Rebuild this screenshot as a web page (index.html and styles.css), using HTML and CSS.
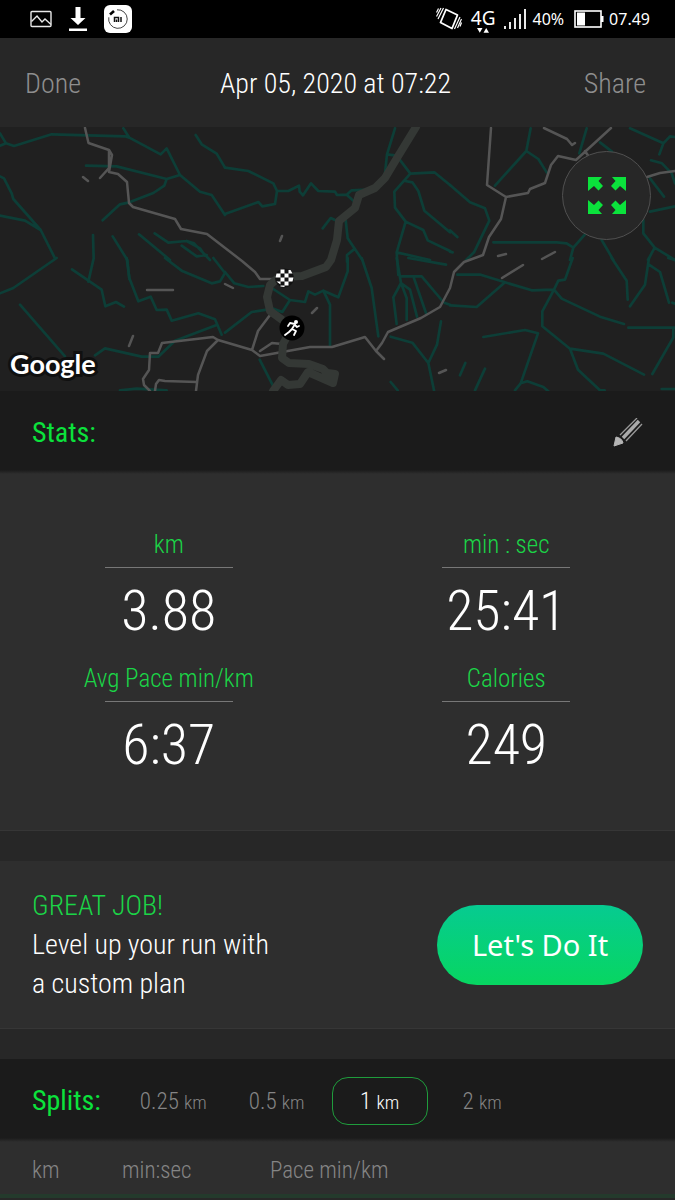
FILE: index.html
```html
<!DOCTYPE html>
<html lang="en">
<head>
<meta charset="utf-8">
<meta name="viewport" content="width=device-width, initial-scale=1">
<title>Run summary</title>
<link rel="stylesheet" href="styles.css">
</head>
<body>
<div class="status">
  <div class="status-left">
    <svg width="22" height="18" viewBox="0 0 22 18" fill="none" stroke="#e8e8e8" stroke-width="1.4"><rect x="1" y="1.500" width="20" height="15" rx="1"/><path d="M1.500 11.500L7 6l5 6 3-3 6 5.500"/></svg>
    <svg width="18" height="24" viewBox="0 0 18 24" fill="#fff"><path d="M6.500 0h5v11h5L9 18 1.500 11h5zM0 21.500h18V24H0z"/></svg>
    <svg width="28" height="28" viewBox="0 0 28 28"><rect width="28" height="28" rx="6" fill="#fff"/><path d="M13 4.800a9.300 9.300 0 1 1-8.200 7.500" fill="none" stroke="#444" stroke-width="1"/><path d="M6 9.500l4-3.500" stroke="#000" stroke-width="2.600"/><path d="M10.500 17v-4.500h4V17M12.500 14.500V17M17 12v5" fill="none" stroke="#111" stroke-width="1.500"/></svg>
  </div>
  <div class="status-right">
    <svg width="26" height="24" viewBox="0 0 26 24" fill="none" stroke="#fff" stroke-width="1.200"><path d="M10 2.500l11.500 5.500-5.500 13.500-11.500-6z" stroke-linejoin="round" stroke-width="1.800"/><path d="M7.500 1L2 12M5 1L.5 9.500M2.500 1.500L.5 5.500M18.500 22l5.500-12M21.500 21l4-9M24 19.500l1.500-4"/></svg>
    <span class="net">4G<svg width="12" height="5" viewBox="0 0 12 5" fill="#fff"><path d="M0 0h5.500L2.800 4.800zM6.500 4.800H12L9.200 0z"/></svg></span>
    <svg width="23" height="20" viewBox="0 0 23 20" fill="#e8e8e8"><path d="M0 17h2v3H0zM5 13h2v7H5zM10 9h2v11h-2zM15 5h2v15h-2zM20 0h2v20h-2z"/></svg>
    <span>40%</span>
    <svg class="battery" width="30" height="18" viewBox="0 0 30 18"><rect x="1" y="1" width="26" height="16" fill="none" stroke="#fff" stroke-width="1.600"/><path d="M3 2.500h8v13H3zM27 6h2.500v6H27z" fill="#fff"/></svg>
    <span>07.49</span>
  </div>
</div>
<header class="topbar">
  <button class="plain">Done</button>
  <h1>Apr 05, 2020 at 07:22</h1>
  <button class="plain">Share</button>
</header>
<section class="map" aria-label="Route map">
  <svg class="roads" viewBox="0 127 675 264" preserveAspectRatio="xMidYMid slice">
    <g class="minor">
      <g transform="translate(0 125) scale(.33333)">
        <path d="M0 25L18 55L42 63L155 28L375 34L388 38L482 88L500 70L540 150L600 200L635 210L675 270M370 10L388 38M0 62L18 55M258 122L350 124L500 162L540 150M500 162L493 182L460 204L388 232L360 238L308 286M587 30L605 58L650 86L675 128M0 154L12 160L35 205L40 222L122 315L165 400M0 272L75 287L122 315M279 330L281 400L265 470M338 334L382 405L388 462M417 328L510 405M464 325L505 353L560 348L582 355L630 405M545 362L590 394L620 390M560 348L600 370L615 392"/>
      </g>
      <g transform="translate(225 125) scale(.33333)">
        <path d="M0 128L70 138L145 175L156 198L190 198L222 182L224 200L234 211L258 175L280 198L330 200L336 210L365 209L380 196L430 194M365 209L390 232M156 198L150 237L112 244L100 231L0 267M510 10L486 88L480 145M486 88L515 92L556 146L628 142L675 180M556 146L508 200L510 248L542 290L595 315L608 346L675 378M540 168L562 172L580 198L598 257L675 322M542 290L515 382L520 450M515 382L615 405M293 310L317 279L335 287M362 285L368 340L412 405M386 374L366 390V410"/>
      </g>
      <g transform="translate(450 125) scale(.33333)">
        <path d="M242 10L229 78L135 182M229 78L265 102L290 142M410 10L388 85M540 10L640 55L660 34L675 36M640 55L628 88M450 52L486 80M603 106L636 115L665 145L675 175M600 160L642 215M600 260L675 244M580 285V325L614 368L675 405M614 368L594 405M0 180L60 232L105 250L118 287L72 382L48 405M0 316L22 336M0 380L8 382M130 352H320L350 355L370 368L405 328M370 368L360 405M455 345L490 405"/>
      </g>
      <g transform="translate(0 258) scale(.33333)">
        <path d="M0 106L40 90L170 0M216 34L305 95L316 145L348 132L372 146M380 0L388 60L415 130L452 116L470 156L500 155L515 188L595 166L645 184L665 230M495 0L545 38L635 76L660 70L675 45L640 0M60 140L195 295M285 292L315 271L425 296H475L525 248L648 202M360 397L410 392L500 397"/>
      </g>
      <g transform="translate(225 258) scale(.33333)">
        <path d="M0 42L28 76L70 87L115 84M140 90L195 126L172 162L145 152L80 162L0 224M195 126L240 132L250 100L270 110L295 98L340 118L368 40V0M295 98L315 140V265M410 0L440 90L460 235M515 0L528 75L505 118L515 198M528 75L545 120V186M528 75L555 95L576 176M530 55H565L603 165M565 55H590L655 132M550 0L663 20M660 135L675 140M497 236L562 254L610 315L627 397M610 315L636 260L648 190M497 372L518 397M104 305L145 385"/>
      </g>
      <g transform="translate(450 258) scale(.33333)">
        <path d="M22 50H92L165 73L245 97L312 95L325 68L345 65L368 0M0 142L80 147L165 73M312 95L277 160V205L360 272L460 287L582 350M312 95L335 122L450 176L522 198M360 272L384 335L450 397H464M100 237L225 216L264 226L212 376L195 397M212 376L232 370L280 387L295 400M46 315L30 352M105 332L75 397M485 0L530 68L533 125M597 0L585 80L540 145M597 20L630 42L657 134M667 134L675 137M535 209H675M670 209V238L607 348M635 393H675M655 0L675 6"/>
      </g>
    </g>
    <g class="major">
      <path d="M85 128L88.500 143L109 150L112 155L109 172L118 174L127 182L129 203L133 207L175 219L181 229L207 234L242 261L255 272L260 279H273M109 151V168L100 178M83 177L88 181M280 241L282 236"/>
      <path d="M491 128L487 185L506 197L501 219L489 237L483 255L464 262L454 272L450 288L440 307L421 318L388 332L382 343L376 351L365 337L332 347L310 347L260 356L252 350L218 340L213 337L162 343L158 353H150L149 370L143 379L144 385L150 391M218 340L207 351L198 375L196 391M197 382L165 381L159 380L156 384L155 391M376 351L384 359M252 350L258 331L270 315M260 351L272 343L282 344M506 197L528 193L530 189L545 183L551 165L558 156L576 160L611 128M585 151L589 157M544 128L567 139L572 145L575 143M647 177L660 173L675 171M498 256L506 254M542 259L555 252M502 278L523 265M147 290H173M129 346L133 336M225 284L233 288M312 313L317 308M439 373L446 370"/>
    </g>
    <path class="river" d="M416 127L397 158L385 178L375 188L359 195L355 208L339 221L337 240L331 260L326 267L302 276L279 277L270 285L267 297L270 311L292 327L283 344L282 358L289 363L309 364L323 369L327 373L335 374L333 383L308 372L300 384L288 385L281 380L273 391"/>
    <g transform="translate(284.500 278)">
      <circle r="9.500" fill="#111"/>
      <path fill="#fff" d="M-4-8.500h4v4h-4zM4-8h2l2 3.500H4zM-8-4.500h4v4h-5zM0-4.500h4v4H0zM-4-.500h4v4h-4zM4-.500h5l-1 4H4zM-8 3.500h4v3zM0 3.500h4v4H0zM-4 7.500h4v1.500l-4-.5z"/>
    </g>
    <g transform="translate(292 328)">
      <circle r="12.500" fill="#000"/><circle cx="4" cy="-6" r="2" fill="#fff"/>
      <path d="M-4-2L-2-5L3-4L0 1L4 3L2 7M0 1L-3 4L-7 7M3-3L5-1L7-2" fill="none" stroke="#fff" stroke-width="1.800"/>
    </g>
  </svg>
  <span class="google">Google</span>
  <button class="expand" aria-label="Expand map">
    <svg width="38" height="38" viewBox="-19 -19 38 38" fill="#0be23c"><path d="M-19-19h14l-3.500 4L-4-10l-4.500 4.500L-13-10l-6 5z"/><path d="M19-19H5l3.500 4L4-10l4.500 4.500L13-10l6 5z"/><path d="M-19 18h14l-3.500-4L-4 9l-4.500-4.500L-13 9l-6-5z"/><path d="M19 18H5l3.500-4L4 9l4.500-4.500L13 9l6-5z"/></svg>
  </button>
</section>
<section>
  <div class="bar">
    <h2>Stats:</h2>
    <button class="edit" aria-label="Edit stats"><svg width="30" height="30" viewBox="0 0 30 30"><path d="M1 28L3 19Q9 20 10 25Z" fill="#b5b5b5" stroke="#b5b5b5" stroke-linejoin="round"/><path d="M10 20L26 3" stroke="#aaa" stroke-width="3.500"/><path d="M7 17L24 0M13 23L29 6" stroke="#999" stroke-width="1.300"/></svg></button>
  </div>
  <dl class="stats">
    <div><dt>km</dt><dd>3.88</dd></div>
    <div><dt>min : sec</dt><dd>25:41</dd></div>
    <div><dt>Avg Pace min/km</dt><dd>6:37</dd></div>
    <div><dt>Calories</dt><dd>249</dd></div>
  </dl>
</section>
<section class="promo">
  <p><strong>GREAT JOB!</strong><br>Level up your run with<br>a custom plan</p>
  <button class="cta">Let's Do It</button>
</section>
<section>
  <div class="bar splits">
    <h2>Splits:</h2>
    <div class="tabs">
      <button>0.25 <small>km</small></button>
      <button>0.5 <small>km</small></button>
      <button class="on">1 <small>km</small></button>
      <button>2 <small>km</small></button>
    </div>
  </div>
  <table class="table">
    <thead><tr><th class="c1" scope="col">km</th><th class="c2" scope="col">min:sec</th><th scope="col">Pace min/km</th></tr></thead>
  </table>
</section>
</body>
</html>
```
FILE: styles.css
```css
* { box-sizing: border-box; }
body {
  margin: 0;
  background: #272727;
  color: #fff;
  font-family: "Roboto Condensed", "Liberation Sans Narrow", Roboto, sans-serif;
  font-weight: 300;
}
button { font: inherit; color: inherit; background: none; border: 0; padding: 0; cursor: pointer; }
h1, h2, p, dl, dd { margin: 0; font-weight: inherit; }
svg { display: block; }

.status {
  height: 38px;
  padding: 0 25px 0 30px;
  background: #000;
  display: flex;
  justify-content: space-between;
  align-items: center;
  font: 400 16px "Noto Sans", sans-serif;
}
.status-left { display: flex; align-items: center; gap: 17px; }
.status-right { display: flex; align-items: center; gap: 5px; }
.battery { margin-left: 5px; }
.net { display: flex; flex-direction: column; align-items: center; font-size: 19px; line-height: 20px; padding: 2px 4px 0; }

.topbar {
  height: 89px;
  padding: 2px 29px 0 25px;
  display: grid;
  grid-template-columns: 1fr auto 1fr;
  align-items: center;
  font-size: 28px;
}
.topbar h1 { font-size: 28px; }
.plain { color: #8e8e8e; justify-self: start; }
.plain:last-child { justify-self: end; }

.map { position: relative; height: 264px; background: #202020; overflow: hidden; }
.roads { width: 100%; height: 100%; fill: none; stroke-linejoin: round; stroke-linecap: round; }
.minor { stroke: #0d3e37; stroke-width: 8; }
.major { stroke: #555; stroke-width: 2.5; }
.river { stroke: #343835; stroke-width: 8; }
.google {
  position: absolute;
  left: 10px;
  bottom: 10px;
  font: 700 27px/34px Lato, sans-serif;
  -webkit-text-stroke: 6px #101010;
  paint-order: stroke fill;
}
.expand {
  position: absolute;
  top: 24px;
  right: 24px;
  width: 89px;
  height: 89px;
  border: 1px solid #505050;
  border-radius: 50%;
  background: #272727;
  display: grid;
  place-items: center;
}

.bar {
  height: 83px;
  padding: 0 32px;
  background: linear-gradient(#1b1b1b 79px, #2e2e2e);
  display: flex;
  align-items: center;
  justify-content: space-between;
}
.bar h2 { font-size: 28px; font-weight: 400; color: #0be23c; }

.stats {
  padding: 49px 0 39px;
  background: #2e2e2e;
  border-bottom: 1px solid #363636;
  display: grid;
  grid-template-columns: 1fr 1fr;
  text-align: center;
}
.stats div { height: 134px; display: flex; flex-direction: column; align-items: center; }
.stats dt { height: 44px; line-height: 43px; font-size: 25px; color: #1bd547; }
.stats dd { width: 128px; border-top: 1px solid #777; font-size: 56px; line-height: 86px; }

.promo {
  margin: 30px 0;
  padding: 25px 32px;
  background: #2e2e2e;
  border-bottom: 1px solid #363636;
  display: flex;
  justify-content: space-between;
  align-items: center;
  font-size: 28px;
  line-height: 39px;
}
.promo strong { font-weight: inherit; color: #1bd547; }
.cta {
  width: 206px;
  height: 80px;
  border-radius: 40px;
  background: linear-gradient(#06cb91, #07d661);
  font: 400 29px "Noto Sans", sans-serif;
}

.splits { justify-content: flex-start; gap: 20px; }
.tabs { display: flex; gap: 4px; }
.tabs button { height: 48px; padding: 2px 18px 0; border: 1px solid transparent; border-radius: 16px; color: #858585; font-size: 23px; }
.tabs small { font-size: 19px; }
.tabs .on { width: 96px; margin: 0 12px 0 4px; border-color: #1f9c3c; color: #fff; }

.table { width: 100%; border-collapse: collapse; background: #2e2e2e; border-bottom: 4px solid #243a2c; }
.table th { height: 54px; padding: 5px 0 0; text-align: left; font-weight: inherit; font-size: 23px; color: #858585; }
.table .c1 { width: 122px; padding-left: 32px; }
.table .c2 { width: 148px; }
```
